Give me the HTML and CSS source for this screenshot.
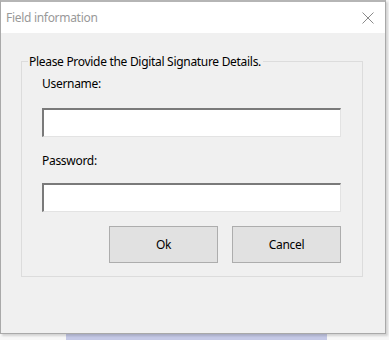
FILE: index.html
```html
<!DOCTYPE html>
<html>
<head lang="en">
    <meta charset="UTF-8">
    <title>Field information</title>
    <link rel="stylesheet" href="styles.css">
</head>
<body>
    <div class="window">
        <div class="titlebar">
            <span class="title">Field information</span>
            <span class="close">
                <svg width="12" height="12" viewBox="0 0 12 12"><path d="M0.5 0.5L11.5 11.5M11.5 0.5L0.5 11.5" stroke="#8a8a8a" stroke-width="1" fill="none"/></svg>
            </span>
        </div>
        <div class="client">
            <fieldset class="group">
                <legend>Please Provide the Digital Signature Details.</legend>
                <label class="lbl first">Username:</label>
                <input class="box" type="text">
                <label class="lbl">Password:</label>
                <input class="box" type="password">
                <div class="buttons">
                    <button class="btn">Ok</button>
                    <button class="btn">Cancel</button>
                </div>
            </fieldset>
        </div>
    </div>
    <div class="taskstrip"></div>
</body>
</html>
```

FILE: styles.css
```css
*{
    margin: 0;
    padding: 0;
    box-sizing: border-box;
}
body{
    width: 389px;
    height: 340px;
    background: #f7f7f7;
    font-family: "Noto Sans", "Open Sans", sans-serif;
    font-size: 12px;
    letter-spacing: -0.3px;
    color: #000;
    overflow: hidden;
}
.window{
    width: 386px;
    height: 334px;
    border: 1px solid #a9a9a9;
    border-top: 2px solid #b5b5b5;
    background: #f0f0f0;
    box-shadow: 2px 2px 2px rgba(0,0,0,0.15);
    display: flex;
    flex-direction: column;
    position: relative;
    z-index: 1;
}
.titlebar{
    height: 31px;
    background: #fff;
    display: flex;
    align-items: center;
    justify-content: space-between;
    padding: 0 11px 0 5px;
}
.title{
    color: #999;
    font-size: 12px;
}
.close{
    display: flex;
}
.client{
    flex: 1;
    padding: 20px 22px 0 20px;
}
.group{
    border: 1px solid #dcdcdc;
    padding: 8px 21px 8px 20px;
    display: flex;
    flex-direction: column;
    height: 224px;
}
.group legend{
    margin-left: -14px;
    padding: 0 2px 0 1px;
    font-size: 12px;
}
.lbl{
    display: block;
    line-height: 16px;
    margin-bottom: 14px;
}
.lbl.first{
    margin-top: -2px;
    margin-bottom: 16px;
}
.box{
    height: 29px;
    width: 299px;
    background: #fff;
    border: 1px solid #e3e3e3;
    border-top: 2px solid #7a7a7a;
    border-left: 2px solid #7a7a7a;
    outline: none;
    margin-bottom: 16px;
}
.buttons{
    display: flex;
    justify-content: flex-end;
    gap: 14px;
    margin-top: -2px;
}
.btn{
    width: 109px;
    height: 37px;
    background: #e1e1e1;
    border: 1px solid #adadad;
    font-family: "Noto Sans", "Open Sans", sans-serif;
    font-size: 12px;
    letter-spacing: -0.3px;
    color: #000;
}
.taskstrip{
    margin-left: 66px;
    width: 261px;
    height: 6px;
    background: #c5c9e6;
}
```
